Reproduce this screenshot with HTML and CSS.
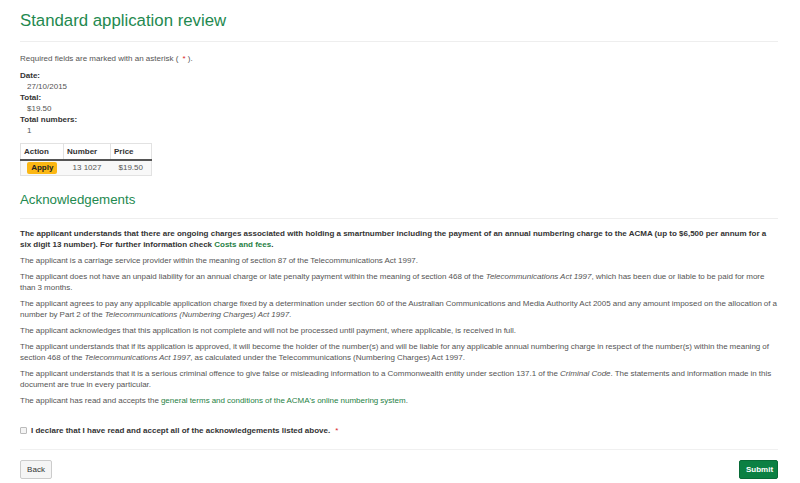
FILE: index.html
```html
<!DOCTYPE html>
<html>
<head>
<meta charset="utf-8">
<link rel="stylesheet" href="styles.css">
</head>
<body>
<div class="page">
  <h1 class="title">Standard application review</h1>
  <p class="required">Required fields are marked with an asterisk ( <span class="star">*</span> ).</p>
  <dl class="summary">
    <dt>Date:</dt><dd>27/10/2015</dd>
    <dt>Total:</dt><dd>$19.50</dd>
    <dt>Total numbers:</dt><dd>1</dd>
  </dl>
  <table class="numbers">
    <thead>
      <tr><th class="c-action">Action</th><th class="c-number">Number</th><th class="c-price">Price</th></tr>
    </thead>
    <tbody>
      <tr><td><span class="apply">Apply</span></td><td>13 1027</td><td>$19.50</td></tr>
    </tbody>
  </table>
  <h2 class="section">Acknowledgements</h2>
  <div class="ack">
    <p class="strong">The applicant understands that there are ongoing charges associated with holding a smartnumber including the payment of an annual numbering charge to the ACMA (up to $6,500 per annum for a six digit 13 number). For further information check <a href="#">Costs and fees</a>.</p>
    <p>The applicant is a carriage service provider within the meaning of section 87 of the Telecommunications Act 1997.</p>
    <p>The applicant does not have an unpaid liability for an annual charge or late penalty payment within the meaning of section 468 of the <em>Telecommunications Act 1997</em>, which has been due or liable to be paid for more than 3 months.</p>
    <p>The applicant agrees to pay any applicable application charge fixed by a determination under section 60 of the Australian Communications and Media Authority Act 2005 and any amount imposed on the allocation of a number by Part 2 of the <em>Telecommunications (Numbering Charges) Act 1997</em>.</p>
    <p>The applicant acknowledges that this application is not complete and will not be processed until payment, where applicable, is received in full.</p>
    <p>The applicant understands that if its application is approved, it will become the holder of the number(s) and will be liable for any applicable annual numbering charge in respect of the number(s) within the meaning of section 468 of the <em>Telecommunications Act 1997</em>, as calculated under the Telecommunications (Numbering Charges) Act 1997.</p>
    <p>The applicant understands that it is a serious criminal offence to give false or misleading information to a Commonwealth entity under section 137.1 of the <em>Criminal Code</em>. The statements and information made in this document are true in every particular.</p>
    <p>The applicant has read and accepts the <a href="#">general terms and conditions of the ACMA's online numbering system</a>.</p>
  </div>
  <label class="declare"><span class="box"></span><span class="declare-text">I declare that I have read and accept all of the acknowledgements listed above.</span><span class="star">*</span></label>
  <div class="actions">
    <button class="btn back">Back</button>
    <button class="btn submit">Submit</button>
  </div>
</div>
</body>
</html>
```

FILE: styles.css
```css
* { box-sizing: border-box; }
body {
  margin: 0;
  font-family: "Liberation Sans", Arial, sans-serif;
  font-size: 8px;
  line-height: 11px;
  color: #555;
  background: #fff;
}
.page {
  padding: 0 22px 0 20px;
}
.title {
  margin: 10px 0 0;
  font-weight: normal;
  font-size: 16.8px;
  line-height: 22px;
  color: #23894f;
  padding-bottom: 9px;
  border-bottom: 1px solid #eeeeee;
}
.required {
  margin: 11px 0 6px;
}
.star { color: #d9262c; margin-left: 2px; }
.summary { margin: 0 0 7px; }
.summary dt { font-weight: bold; color: #333; }
.summary dd { margin: 0 0 0 7px; }
.numbers {
  border-collapse: collapse;
  border: 1px solid #e2e2e2;
  width: 132px;
}
.numbers th {
  text-align: left;
  font-weight: bold;
  color: #333;
  height: 16px;
  padding: 0 3px;
  border-right: 1px solid #e2e2e2;
  border-bottom: 2px solid #555;
}
.c-action { width: 43px; }
.c-number { width: 47px; }
.numbers td {
  background: #f8f8f8;
  text-align: center;
  height: 16px;
  padding: 0 2px;
}
.apply {
  display: inline-block;
  background: #fbb714;
  color: #222;
  font-weight: bold;
  font-size: 8px;
  line-height: 12px;
  padding: 0 4px;
  border-radius: 2px;
}
.section {
  margin: 15px 0 0;
  font-weight: normal;
  font-size: 13.3px;
  line-height: 18px;
  color: #23894f;
  padding-bottom: 9px;
  border-bottom: 1px solid #eeeeee;
}
.ack { padding-top: 9px; }
.ack p { margin: 0 0 5px; word-spacing: -0.2px; }
.ack p.strong { font-weight: bold; color: #333; word-spacing: 0; }
.ack a { color: #1f7f45; text-decoration: none; }
.ack p.strong a { font-weight: bold; }
.declare {
  display: flex;
  align-items: center;
  margin-top: 19px;
  padding-bottom: 13px;
  border-bottom: 1px solid #f0f0f0;
  font-weight: bold;
  color: #333;
}
.box {
  width: 7px;
  height: 7px;
  border: 1px solid #bbb;
  border-radius: 1px;
  background: #f4f4f4;
  margin-right: 4px;
}
.declare .star { margin-left: 5px; font-weight: normal; }
.actions {
  display: flex;
  justify-content: space-between;
  padding-top: 10px;
}
.btn {
  font-family: "Liberation Sans", Arial, sans-serif;
  font-size: 8px;
  height: 19px;
  padding: 0 6px;
  border-radius: 2px;
  cursor: pointer;
}
.back {
  background: #f5f5f5;
  border: 1px solid #ccc;
  color: #333;
  width: 32px;
}
.submit {
  background: #0b8043;
  border: 1px solid #086b37;
  color: #fff;
  font-weight: bold;
  width: 39px;
}
```
